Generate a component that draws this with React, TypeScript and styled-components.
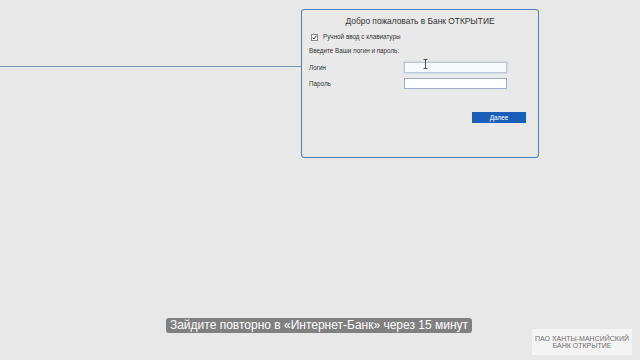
import React from 'react';
import styled, { createGlobalStyle } from 'styled-components';

const GlobalStyle = createGlobalStyle`
  html, body {
    margin: 0;
    padding: 0;
    background: #e8e8e8;
  }
  body {
    font-family: "Liberation Sans", Arial, sans-serif;
  }
`;

const Screen = styled.div`
  position: relative;
  width: 640px;
  height: 360px;
  overflow: hidden;
  background: #e8e8e8;
`;

const TopRow = styled.div`
  display: flex;
  align-items: flex-start;
  padding-top: 9px;
`;

const Connector = styled.div`
  width: 301px;
  height: 1px;
  margin-top: 57px;
  background: #7d93b3;
`;

const Dialog = styled.div`
  box-sizing: border-box;
  width: 238px;
  height: 149px;
  border: 1px solid #4d7cb6;
  border-radius: 3px;
  background: #e9e9e9;
  padding: 4px 7px 0 7px;
  color: #333;
`;

const Title = styled.div`
  text-align: center;
  font-size: 8.4px;
  font-weight: normal;
  color: #333;
  line-height: 14px;
  margin-bottom: 5px;
`;

const CheckRow = styled.div`
  display: flex;
  align-items: center;
  gap: 5px;
  padding-left: 2px;
  font-size: 6.3px;
  line-height: 8px;
  margin-bottom: 6px;
`;

const CheckBox = styled.span`
  box-sizing: border-box;
  width: 7px;
  height: 7px;
  border: 1px solid #8a8a8a;
  background: #fff;
  display: flex;
  align-items: center;
  justify-content: center;
`;

const Hint = styled.div`
  font-size: 6.3px;
  line-height: 8px;
  margin-bottom: 7px;
`;

const FieldRow = styled.div`
  display: flex;
  align-items: center;
  height: 11px;
  margin-bottom: 5px;
`;

const FieldLabel = styled.span`
  width: 95px;
  font-size: 6.3px;
`;

const Field = styled.div<{ focused?: boolean }>`
  position: relative;
  box-sizing: border-box;
  width: 103px;
  height: 11px;
  border: 1px solid ${(p) => (p.focused ? '#b9c6d8' : '#9fb0c8')};
  background: ${(p) => (p.focused ? '#f7f9fc' : '#fff')};
  box-shadow: ${(p) => (p.focused ? '0 0 1px 1px #d5dde8' : 'none')};
`;

const Cursor = styled.svg`
  position: absolute;
  left: 18px;
  top: -4px;
`;

const Actions = styled.div`
  display: flex;
  justify-content: flex-end;
  padding-right: 5px;
  margin-top: 23px;
`;

const Button = styled.button`
  width: 54px;
  height: 11px;
  padding: 0;
  border: none;
  background: #1a5fb7;
  color: #fff;
  font-family: inherit;
  font-size: 6.4px;
  line-height: 11px;
`;

const Subtitle = styled.div`
  position: absolute;
  left: 166px;
  top: 318px;
  width: 306px;
  height: 15px;
  border-radius: 3px;
  background: #808080;
  color: #fff;
  font-size: 12px;
  line-height: 15px;
  text-align: center;
  white-space: nowrap;
`;

const Watermark = styled.div`
  position: absolute;
  left: 532px;
  top: 329px;
  width: 100px;
  height: 26px;
  background: #f4f4f4;
  color: #707070;
  font-size: 7px;
  line-height: 7px;
  text-align: center;
  display: flex;
  flex-direction: column;
  justify-content: center;
`;

export default function App(): JSX.Element {
  return (
    <Screen>
      <GlobalStyle />
      <TopRow>
        <Connector />
        <Dialog>
          <Title>Добро пожаловать в Банк ОТКРЫТИЕ</Title>
          <CheckRow>
            <CheckBox>
              <svg width="5" height="5" viewBox="0 0 5 5">
                <path d="M0.6 2.6 L2 4 L4.5 0.6" fill="none" stroke="#222" strokeWidth="0.9" />
              </svg>
            </CheckBox>
            <span>Ручной ввод с клавиатуры</span>
          </CheckRow>
          <Hint>Введите Ваши логин и пароль:</Hint>
          <FieldRow>
            <FieldLabel>Логин</FieldLabel>
            <Field focused>
              <Cursor width="5" height="10" viewBox="0 0 5 10">
                <path d="M0.5 0.5 H4.5 M2.5 0.5 V9.5 M0.5 9.5 H4.5" stroke="#555" strokeWidth="1" fill="none" />
              </Cursor>
            </Field>
          </FieldRow>
          <FieldRow>
            <FieldLabel>Пароль</FieldLabel>
            <Field />
          </FieldRow>
          <Actions>
            <Button>Далее</Button>
          </Actions>
        </Dialog>
      </TopRow>
      <Subtitle>Зайдите повторно в «Интернет-Банк» через 15 минут</Subtitle>
      <Watermark>
        <span>ПАО ХАНТЫ-МАНСИЙСКИЙ</span>
        <span>БАНК ОТКРЫТИЕ</span>
      </Watermark>
    </Screen>
  );
}
